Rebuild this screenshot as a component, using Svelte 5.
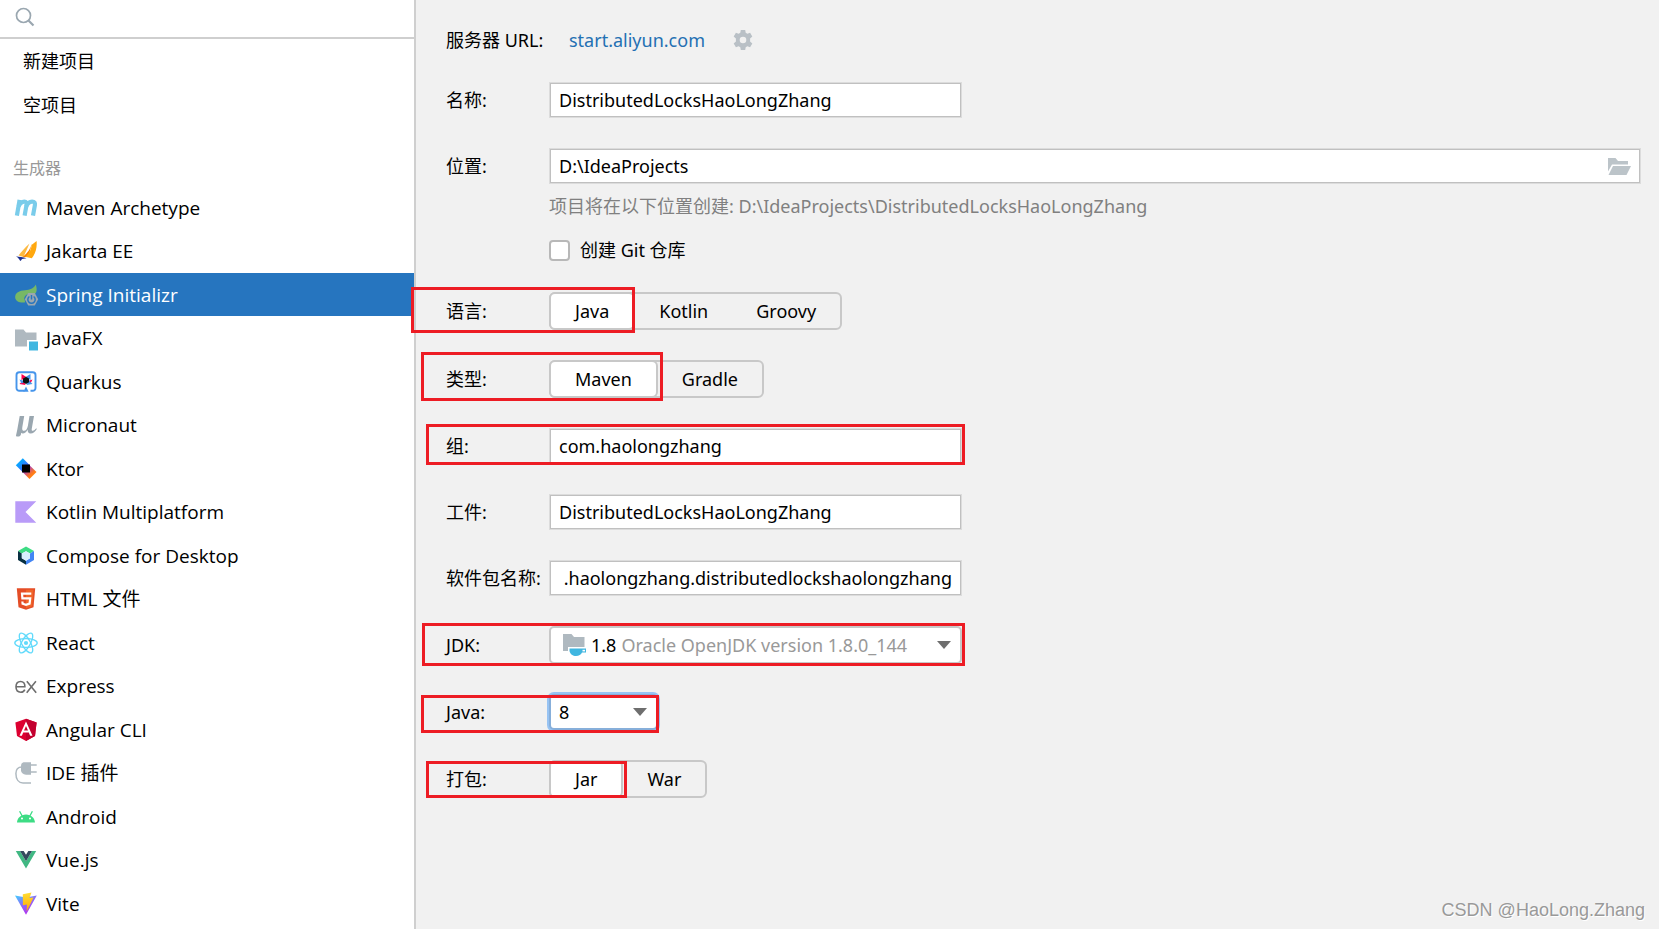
<script>
  const starters = ['新建项目', '空项目'];
  const generators = [
    ['maven', 'Maven Archetype'],
    ['jakarta', 'Jakarta EE'],
    ['spring', 'Spring Initializr'],
    ['javafx', 'JavaFX'],
    ['quarkus', 'Quarkus'],
    ['micronaut', 'Micronaut'],
    ['ktor', 'Ktor'],
    ['kotlin', 'Kotlin Multiplatform'],
    ['compose', 'Compose for Desktop'],
    ['html', 'HTML 文件'],
    ['react', 'React'],
    ['express', 'Express'],
    ['angular', 'Angular CLI'],
    ['plugin', 'IDE 插件'],
    ['android', 'Android'],
    ['vue', 'Vue.js'],
    ['vite', 'Vite']
  ];
  let selected = $state('spring');
  let language = $state('Java');
  let buildType = $state('Maven');
  let packaging = $state('Jar');
</script>

{#snippet segments(name, options, value, pick)}
  <div class="segments" role="group" aria-labelledby={name}>
    {#each options as option}
      <button type="button" class:on={option === value} aria-pressed={option === value} onclick={() => pick(option)}>{option}</button>
    {/each}
  </div>
{/snippet}

{#snippet icon(id)}
  <svg class="icon" viewBox="0 0 24 24" aria-hidden="true">
    {#if id === 'maven'}
      <g fill="none" stroke="#7accea" stroke-width="4.200">
        <path d="M5.600 3.800 2.900 19.600" />
        <path d="M4.600 10.400C6 7 8.300 5.600 10.300 5.600c2 0 2.600 1.400 2.200 3.600L10.600 19.600" />
        <path d="M12.200 10.400c1.400-3.400 3.700-4.800 5.900-4.800 2.400 0 3.200 1.400 2.800 3.600L19 19.600" />
      </g>
    {:else if id === 'jakarta'}
      <path fill="#fdb940" d="M15.500 4.500C11.500 8 8 12 4.500 16.500l5 1.500z" />
      <path fill="#f98200" d="M18 4.500c-2 6-4.500 9.500-9.500 13.700l5.800-.3z" />
      <path fill="#ffa80f" d="M22.600 2c.6 6.500-1 12.500-4.800 17.200l-6.600-1.400C16 14 17.500 9 17.500 6z" />
      <path fill="#1b2f8f" d="M2 17.200c3 .6 7 1 10.500 2L8 20c-.4 1-1 1.700-1.800 2C5.500 20 4 18.500 2 17.200z" />
    {:else if id === 'spring'}
      <path fill="#77b866" d="M21.800 1.500c1.400 4.500 1.200 8-1 9.500H15c-2.500 0-4 2-4.800 4l1 4.200C7 20 2 19 1.200 15 .6 9.500 5.500 7.600 11 7.200c5-.4 8.600-1.700 10.800-5.700z" />
      <path fill="#9aa7b0" d="M14.200 10h6.600l3.400 6.200-3.400 6.300h-6.600l-3.400-6.300z" />
      <g fill="none" stroke="#2675bf" stroke-width="1.500">
        <path d="M15.400 13.500a3.700 3.700 0 1 0 4.200 0" />
        <path d="M17.500 12v4.500" />
      </g>
    {:else if id === 'javafx'}
      <path fill="#afb9c0" d="M1 3.500h8.500l2.500 3h10.500V14H13v6.500H1z" />
      <path fill="#40b6e0" d="M15 15.500h9v9h-9z" />
    {:else if id === 'quarkus'}
      <path fill="none" stroke="#4695eb" stroke-width="1.900" d="M10.500 20.800H5.300A2.800 2.800 0 0 1 2.500 18V5a2.800 2.800 0 0 1 2.800-2.800h13.400A2.800 2.800 0 0 1 21.500 5v13a2.800 2.800 0 0 1-2.800 2.800h-2.200" />
      <path fill="#4695eb" d="m12 16.500 2.600 5.200H9.400z" />
      <path fill="#ff004a" d="m7.500 4 4.500 2.800-4.500 3.500zM18.500 9.500l-2 4-4-2zM5.500 14l4-4 2 5z" />
      <path fill="#4695eb" d="M16.500 4 12 6.800l4.500 3.500zM5.500 9.500l2 4 4-2zM18.500 14l-4-4-2 5z" />
      <path fill="#091313" d="m12 6.800 3 1.800v3.600l-3 1.800-3-1.800V8.600z" />
    {:else if id === 'micronaut'}
      <path fill="#9aa7b0" d="M5.700 3h4.500L8.300 14.200c-.4 2.600.3 3.600 1.700 3.600 2 0 3.300-2 3.900-5L15.500 3H20l-2.200 12.500c-.3 1.700 0 2.300.9 2.300 1.200 0 2.600-1.400 3.600-2.500l.5.600c-1.400 2.500-3.600 4.500-6.200 4.500-2.300 0-3.200-1.500-2.900-3.900-1.300 2.500-3 3.900-5 3.900-.8 0-1.300-.3-1.700-.7.200 1.500-.2 3.900-3 3.900-1.200 0-2-.4-2-1.200C2.300 21.500 3.200 17 3.400 16z" />
    {:else if id === 'ktor'}
      <defs>
        <linearGradient id="ktorWarm" x1="0" y1="0" x2="1" y2="1"><stop offset=".25" stop-color="#a03bd0" /><stop offset=".65" stop-color="#ff7a1a" /><stop offset="1" stop-color="#ff9500" /></linearGradient>
        <linearGradient id="ktorCool" x1="0" y1="0" x2="1" y2="1"><stop offset=".3" stop-color="#0aa5ff" /><stop offset="1" stop-color="#6a38ff" /></linearGradient>
      </defs>
      <path fill="url(#ktorWarm)" d="m15.500 8.200 7 6.700-7 7-7-7z" />
      <path fill="url(#ktorCool)" d="m8.800 1.200 7 7-7 7-7-7z" />
      <path d="M8 7.500h8v8H8z" />
    {:else if id === 'kotlin'}
      <path fill="#b99bf8" d="M1.300 1.300h21L11.500 12l10.800 10.800h-21z" />
    {:else if id === 'compose'}
      <path fill="#3ddc84" d="m12 2.500 8 4.500-4 2.500-4-2.300L7.800 9.500 4 7z" />
      <path fill="#083042" d="m4 7 3.800 2.500v4.700l4.200 2.500v4L4 16z" />
      <path fill="#4285f4" d="M20 7v9l-8 4.700v-4l4-2.500V9.500z" />
      <path fill="#d7effe" d="m12 7.200 4 2.300v4.700l-4 2.500-4.200-2.500V9.500z" />
    {:else if id === 'html'}
      <path fill="#e44d26" d="M2.800 1.200h18.400L19.500 20.300 12 22.800l-7.500-2.500z" />
      <path fill="#f16529" d="M12 2.700h7.500l-1.400 16.500-6.100 2z" />
      <path fill="none" stroke="#fff" stroke-width="2.200" d="M17.300 6.600H8l.4 4.800h7.800l-.6 5.200-3.600 1.200-3.400-1.100-.2-2.200" />
    {:else if id === 'react'}
      <circle cx="12" cy="12" r="2.100" fill="#61dafb" />
      <g fill="none" stroke="#61dafb" stroke-width="1.300">
        <ellipse cx="12" cy="12" rx="11.200" ry="4.300" />
        <ellipse cx="12" cy="12" rx="11.200" ry="4.300" transform="rotate(60 12 12)" />
        <ellipse cx="12" cy="12" rx="11.200" ry="4.300" transform="rotate(120 12 12)" />
      </g>
    {:else if id === 'express'}
      <g fill="none" stroke="#6e6e6e" stroke-width="1.600">
        <path d="M2.200 12.700h8.700c.1-3.400-1.600-5.200-4.300-5.200-2.800 0-4.600 2.200-4.600 5.300s1.700 5.400 4.800 5.400c1.900 0 3.400-1 4-2.600" />
        <path d="m12.800 7.200 9.400 11.500M21.900 7.200l-9.200 11.500" />
      </g>
    {:else if id === 'angular'}
      <path fill="#dd0031" d="m12 .8 10.600 3.700L21 18l-9 5-9-5L1.400 4.500z" />
      <path fill="#c3002f" d="m12 .8 10.600 3.700L21 18l-9 5z" />
      <path fill="#fff" fill-rule="evenodd" d="M12 3.500 5.500 17.700h2.400l1.300-3.200h5.600l1.300 3.200h2.400zm0 4.400 2 4.700h-4z" />
    {:else if id === 'plugin'}
      <g fill="none" stroke="#afb9c0" stroke-width="1.500">
        <path d="M8 6C3.800 6 1.900 8.500 1.900 12.500c0 5.800 2.700 9.500 7.100 9.500h8" />
        <path d="M16 3.900h6.700M16 11h6.700" />
      </g>
      <path fill="#afb9c0" d="M9.500 1.200H17v12.500h-5c-3-.2-5-2-5-4.500V5c0-2 .8-3.200 2.500-3.800z" />
    {:else if id === 'android'}
      <path fill="#3ddc84" fill-rule="evenodd" d="M3 17.600c.2-4.200 3.700-8 9-8s8.800 3.800 9 8zm5-5a1 1 0 1 0 0 2 1 1 0 0 0 0-2zm8 0a1 1 0 1 0 0 2 1 1 0 0 0 0-2z" />
      <path fill="none" stroke="#3ddc84" stroke-width="1.300" d="m8.200 11-2.600-4.800M15.800 11l2.600-4.800" />
    {:else if id === 'vue'}
      <path fill="#41b883" d="M1.800 3H6l6 10.300L18 3h4.200L12 20.500z" />
      <path fill="#34495e" d="M6 3h3.700L12 6.800 14.300 3H18l-6 10.300z" />
    {:else if id === 'vite'}
      <defs>
        <linearGradient id="viteBody" x1="0" y1="0" x2=".6" y2="1"><stop stop-color="#41d1ff" /><stop offset=".5" stop-color="#8b6cf8" /><stop offset="1" stop-color="#b52cf0" /></linearGradient>
        <linearGradient id="viteBolt" x1="0" y1="0" x2="0" y2="1"><stop stop-color="#ffdd35" /><stop offset="1" stop-color="#ffa800" /></linearGradient>
      </defs>
      <path fill="url(#viteBody)" d="M1 3.500 12 5.500l10.800-2L12 22.800z" />
      <path fill="url(#viteBolt)" d="m8.800 2.200 8.700-1.700-2 5.500 4-.5-6.800 14 .2-7-4 .8z" />
    {/if}
  </svg>
{/snippet}

{#snippet caret()}
  <svg class="caret" viewBox="0 0 14 8" aria-hidden="true"><path fill="#6e6e6e" d="M0 0h14L7 8z" /></svg>
{/snippet}

<div class="window">
  <aside>
    <label class="search">
      <svg viewBox="0 0 20 20" aria-hidden="true"><g fill="none" stroke="#9aa7b0"><circle cx="8.500" cy="8.500" r="7" stroke-width="1.700" /><path stroke-width="2.200" d="m13.500 13.500 5 5" /></g></svg>
      <input type="search" aria-label="搜索" />
    </label>
    <ul class="starters">
      {#each starters as item}
        <li><button type="button">{item}</button></li>
      {/each}
    </ul>
    <h2>生成器</h2>
    <ul class="generators">
      {#each generators as [id, name]}
        <li>
          <button type="button" class:selected={selected === id} onclick={() => (selected = id)}>
            {@render icon(id)}<span>{name}</span>
          </button>
        </li>
      {/each}
    </ul>
  </aside>

  <main>
    <div class="server">
      <span class="label">服务器 URL:</span>
      <a href="https://start.aliyun.com">start.aliyun.com</a>
      <button type="button" class="gear" aria-label="设置">
        <svg viewBox="0 0 20 20" aria-hidden="true">
          <path fill="#b9c0c6" fill-rule="evenodd" d="M7.800 0h4.400l.5 2.800 1.700 1L17.100 2.800l2.200 3.800-2.200 1.900v3l2.200 1.900-2.200 3.800-2.700-1-1.700 1-.5 2.800H7.800l-.5-2.800-1.700-1-2.700 1L.7 13.400l2.200-1.900v-3L.7 6.600l2.200-3.800 2.700 1 1.700-1zM10 6.700a3.300 3.300 0 1 0 0 6.600 3.300 3.300 0 0 0 0-6.600z" />
        </svg>
      </button>
    </div>

    <div class="row">
      <label class="label" for="name">名称:</label>
      <input id="name" class="field" value="DistributedLocksHaoLongZhang" />
    </div>

    <div class="row">
      <label class="label" for="location">位置:</label>
      <div class="path">
        <input id="location" value="D:\IdeaProjects" />
        <button type="button" aria-label="浏览">
          <svg viewBox="0 0 23 17" aria-hidden="true"><g fill="#bcc4c9"><path d="M0 0h7.500l2.500 3h10v3.500H4L0 13.500z" /><path d="M5 8h18l-4.500 9H.5z" /></g></svg>
        </button>
      </div>
    </div>
    <p class="hint">项目将在以下位置创建: D:\IdeaProjects\DistributedLocksHaoLongZhang</p>
    <label class="git"><input type="checkbox" /><span>创建 Git 仓库</span></label>

    <div class="row">
      <span class="label" id="language">语言:</span>
      {@render segments('language', ['Java', 'Kotlin', 'Groovy'], language, (v) => (language = v))}
      <i class="mark mark-language"></i>
    </div>
    <div class="row">
      <span class="label" id="type">类型:</span>
      {@render segments('type', ['Maven', 'Gradle'], buildType, (v) => (buildType = v))}
      <i class="mark mark-type"></i>
    </div>
    <div class="row">
      <label class="label" for="group">组:</label>
      <input id="group" class="field" value="com.haolongzhang" />
      <i class="mark mark-group"></i>
    </div>
    <div class="row">
      <label class="label" for="artifact">工件:</label>
      <input id="artifact" class="field" value="DistributedLocksHaoLongZhang" />
    </div>
    <div class="row">
      <label class="label" for="package">软件包名称:</label>
      <input id="package" class="field tail" value=".haolongzhang.distributedlockshaolongzhang" />
    </div>
    <div class="row">
      <label class="label" for="jdk">JDK:</label>
      <div class="combo jdk">
        <svg class="jdk-icon" viewBox="0 0 23 22" aria-hidden="true">
          <path fill="#afb9c0" d="M0 0h8.500l2.500 3h10.500v10H5v4H0z" />
          <path fill="#40b6e0" d="M6.500 14.500H23v4h-4c-1 2-3 3.500-6 3.500s-6-2-6.500-5z" />
          <path fill="#fff" d="M19.500 15.800H22v1.600h-2.500z" />
        </svg>
        <span>1.8</span>
        <select id="jdk"><option>Oracle OpenJDK version 1.8.0_144</option></select>
        {@render caret()}
      </div>
      <i class="mark mark-jdk"></i>
    </div>
    <div class="row">
      <label class="label" for="java">Java:</label>
      <div class="combo java">
        <select id="java"><option>8</option></select>
        {@render caret()}
      </div>
      <i class="mark mark-java"></i>
    </div>
    <div class="row">
      <span class="label" id="packaging">打包:</span>
      {@render segments('packaging', ['Jar', 'War'], packaging, (v) => (packaging = v))}
      <i class="mark mark-packaging"></i>
    </div>
    <footer>CSDN @HaoLong.Zhang</footer>
  </main>
</div>

<style>
  :global(body) { margin: 0; }
  .window, .window * { box-sizing: border-box; }
  .window {
    display: flex;
    min-height: 100vh;
    background: #f1f1f1;
    color: #000;
    font: 18px/24px "Noto Sans", "Noto Sans CJK SC", sans-serif;
  }
  button, input, select { font: inherit; color: inherit; margin: 0; padding: 0; border: 0; background: none; outline: 0; }
  button { cursor: pointer; }
  ul { list-style: none; margin: 0; padding: 0; }

  aside { flex: 0 0 416px; background: #fff; border-right: 2px solid #cfcfcf; }
  .search { display: flex; align-items: center; gap: 8px; height: 39px; padding: 0 15px 4px; border-bottom: 2px solid #cfcfcf; }
  .search svg { width: 20px; height: 20px; flex: none; }
  .search input { flex: 1; min-width: 0; }
  .starters { display: grid; grid-auto-rows: 44px; }
  .starters button { width: 100%; height: 100%; padding-left: 23px; text-align: left; }
  h2 { margin: 0; padding: 23px 0 0 13px; font-size: 16px; line-height: 36px; font-weight: 400; color: #999; }
  .generators { display: grid; grid-auto-rows: 43px 44px; font-family: "Open Sans", "Noto Sans CJK SC", sans-serif; font-size: 19px; }
  .generators button { display: flex; align-items: center; gap: 8px; width: 100%; height: 100%; padding-left: 14px; text-align: left; }
  .generators .selected { background: #2675bf; color: #fff; }
  .icon { width: 24px; height: 24px; flex: none; overflow: visible; }

  main { position: relative; flex: 1; min-width: 0; display: flex; flex-direction: column; gap: 30px; padding: 28px 18px 30px 30px; }
  .label { flex: 0 0 103px; white-space: nowrap; }
  .server { display: flex; align-items: center; height: 24px; }
  .server a { margin-left: 20px; color: #2470b3; text-decoration: none; }
  .gear { margin-left: 28px; width: 20px; height: 20px; }
  .gear svg { display: block; }
  .row { position: relative; display: flex; align-items: center; }
  .field { width: 413px; }
  .field, .path { height: 36px; padding: 0 9px; background: #fff; border: 1px solid #dcdcdc; box-shadow: inset 0 0 0 1px #c0c0c0; }
  .tail { text-align: right; }
  .path { flex: 1; display: flex; align-items: center; }
  .path input { flex: 1; min-width: 0; }
  .path button { width: 23px; height: 17px; }
  .path svg { display: block; width: 23px; height: 17px; }
  .hint { margin: -20px 0 0 103px; color: #808080; }
  .git { display: flex; align-items: center; gap: 10px; margin: -10px 0 0 103px; }
  .git input { appearance: none; width: 21px; height: 21px; background: #fff; border: 2px solid #b8b8b8; border-radius: 4px; }

  .segments { display: flex; height: 38px; border: 2px solid #c8c8c8; border-radius: 6px; }
  .segments button { padding: 0 24px; }
  .segments .on { margin: -2px 0 -2px -2px; background: #fff; border: 2px solid #c8c8c8; border-radius: 6px; }

  .combo { position: relative; display: flex; align-items: center; background: #fff; border: 2px solid #c8c8c8; border-radius: 5px; }
  .combo select { appearance: none; flex: 1; min-width: 0; height: 100%; }
  .caret { position: absolute; right: 9px; width: 14px; height: 8px; pointer-events: none; }
  .jdk { width: 413px; height: 38px; padding-left: 12px; }
  .jdk-icon { width: 23px; height: 22px; margin-right: 5px; }
  .jdk span { margin-right: 5px; }
  .jdk select { color: #999; }
  .java { width: 109px; height: 36px; padding-left: 8px; border-color: #87afda; box-shadow: 0 0 0 2px #97c3f3; }

  .mark { position: absolute; border: 3px solid #ed1c24; pointer-events: none; }
  .mark-language { left: -35px; top: -5px; width: 224px; height: 46px; }
  .mark-type { left: -25px; top: -8px; width: 242px; height: 49px; }
  .mark-group { left: -20px; top: -4px; width: 539px; height: 41px; }
  .mark-jdk { left: -24px; top: -3px; width: 543px; height: 43px; }
  .mark-java { left: -25px; top: 1px; width: 238px; height: 38px; }
  .mark-packaging { left: -20px; top: 1px; width: 201px; height: 37px; }

  footer { position: absolute; right: 14px; bottom: 7px; font: 18px/24px "Liberation Sans", sans-serif; color: #999; text-shadow: 1px 1px 0 #fff; }
</style>
